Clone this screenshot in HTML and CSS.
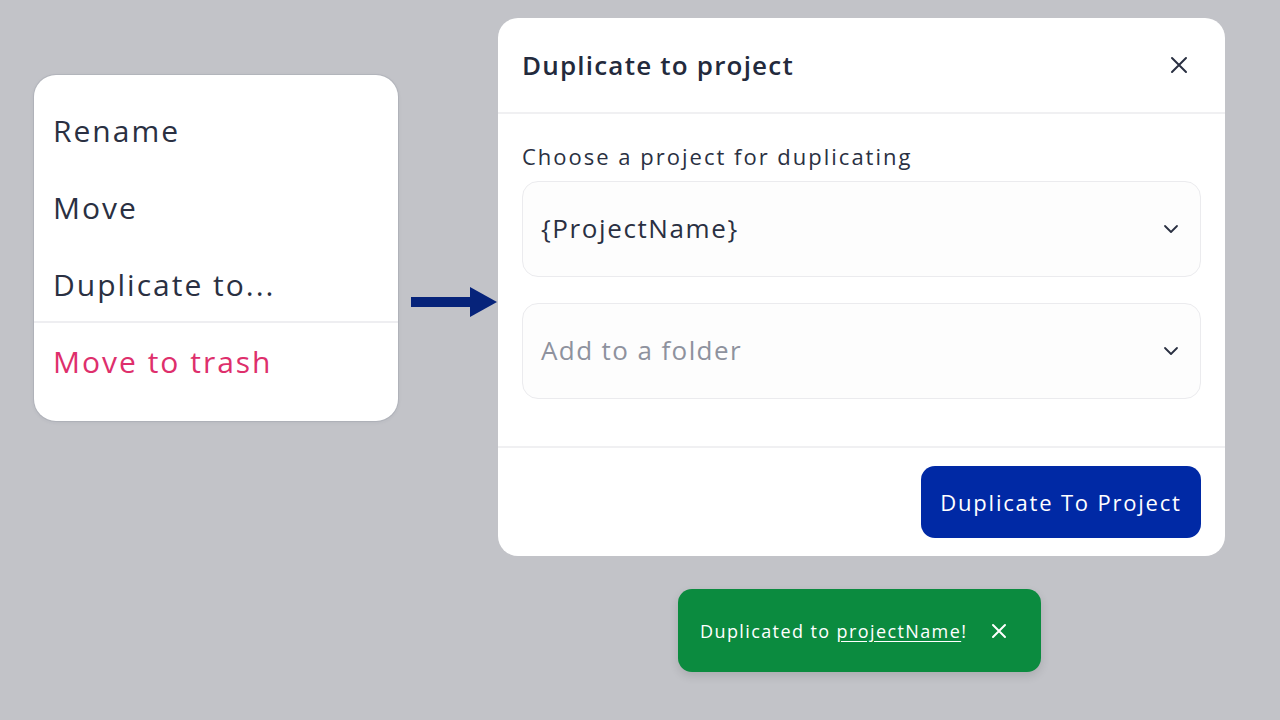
FILE: index.html
```html
<!DOCTYPE html>
<html lang="en">
<head>
<meta charset="utf-8">
<title>Duplicate to project</title>
<link rel="stylesheet" href="styles.css">
</head>
<body>
<div class="stage">
  <div class="menu">
    <div class="menu-item">Rename</div>
    <div class="menu-item">Move</div>
    <div class="menu-item">Duplicate to...</div>
    <div class="menu-sep"></div>
    <div class="menu-item danger">Move to trash</div>
  </div>
  <div class="arrow">
    <svg width="86" height="32" viewBox="0 0 86 32"><rect x="0" y="10" width="60" height="10" fill="#06237a"/><polygon points="59,0 86,15 59,30" fill="#06237a"/></svg>
  </div>
  <div class="right">
    <div class="modal">
      <div class="modal-head">
        <h1 class="modal-title">Duplicate to project</h1>
        <svg class="close" width="18" height="18" viewBox="0 0 18 18"><path d="M2 2 L16 16 M16 2 L2 16" stroke="#2a3042" stroke-width="2" stroke-linecap="round"/></svg>
      </div>
      <div class="modal-body">
        <div class="label">Choose a project for duplicating</div>
        <div class="select">
          <span class="value">{ProjectName}</span>
          <svg class="chev" width="16" height="10" viewBox="0 0 16 10"><path d="M2 2 L8 8 L14 2" fill="none" stroke="#2a3042" stroke-width="1.8" stroke-linecap="round" stroke-linejoin="round"/></svg>
        </div>
        <div class="select">
          <span class="value placeholder">Add to a folder</span>
          <svg class="chev" width="16" height="10" viewBox="0 0 16 10"><path d="M2 2 L8 8 L14 2" fill="none" stroke="#2a3042" stroke-width="1.8" stroke-linecap="round" stroke-linejoin="round"/></svg>
        </div>
      </div>
      <div class="modal-foot">
        <button class="primary">Duplicate To Project</button>
      </div>
    </div>
    <div class="toast">
      <span class="toast-text">Duplicated to <u>projectName</u>!</span>
      <svg width="16" height="16" viewBox="0 0 16 16"><path d="M2 2 L14 14 M14 2 L2 14" stroke="#ffffff" stroke-width="2" stroke-linecap="round"/></svg>
    </div>
  </div>
</div>
</body>
</html>
```

FILE: styles.css
```css
* { box-sizing: border-box; }
html, body { margin: 0; padding: 0; }
body {
  background: #c2c3c8;
  font-family: "Open Sans", "Noto Sans", "Liberation Sans", sans-serif;
  color: #2a3042;
  width: 1280px;
  height: 720px;
  overflow: hidden;
}
.stage {
  display: flex;
  align-items: flex-start;
  padding: 18px 0 0 34px;
}
.menu {
  width: 364px;
  margin-top: 57px;
  background: #ffffff;
  border-radius: 22px;
  box-shadow: 0 0 0 1px rgba(40, 50, 80, 0.08), 0 1px 4px rgba(40, 50, 80, 0.08);
  padding: 17px 0 21px;
}
.menu-item {
  height: 77px;
  display: flex;
  align-items: center;
  padding-left: 19px;
  font-size: 30px;
  color: #2a3042;
  letter-spacing: 2px;
}
.menu-item.danger { color: #de2f6c; }
.menu-sep {
  height: 2px;
  background: #eeeef1;
  margin-top: -2px;
}
.arrow {
  margin: 269px 1px 0 13px;
  width: 86px;
  height: 32px;
}
.arrow svg { display: block; }
.right {
  display: flex;
  flex-direction: column;
  align-items: center;
  width: 727px;
}
.modal {
  width: 727px;
  background: #ffffff;
  border-radius: 20px;
}
.modal-head {
  height: 96px;
  display: flex;
  align-items: center;
  justify-content: space-between;
  padding: 0 37px 0 24px;
  border-bottom: 2px solid #f0f0f2;
}
.modal-title {
  margin: 0;
  font-size: 26px;
  font-weight: 600;
  color: #232a3c;
  letter-spacing: 1.2px;
}
.close { display: block; }
.modal-body {
  padding: 27px 24px 47px;
  border-bottom: 2px solid #f0f0f2;
}
.label {
  font-size: 22px;
  color: #2a3042;
  margin-bottom: 10px;
  letter-spacing: 2px;
}
.select {
  height: 96px;
  border: 1.5px solid #ebebee;
  border-radius: 16px;
  background: #fdfdfd;
  display: flex;
  align-items: center;
  justify-content: space-between;
  padding: 0 21px 0 18px;
}
.select + .select { margin-top: 26px; }
.value {
  font-size: 26px;
  color: #2a3042;
  letter-spacing: 1.6px;
  margin-top: -3px;
}
.value.placeholder { color: #8e929e; letter-spacing: 1.4px; }
.chev { display: block; }
.modal-foot {
  display: flex;
  justify-content: flex-end;
  padding: 18px 24px 18px;
}
.primary {
  width: 280px;
  height: 72px;
  border: none;
  border-radius: 14px;
  background: #0029a5;
  color: #ffffff;
  font-family: inherit;
  font-size: 22px;
  font-weight: 500;
  letter-spacing: 1.8px;
}
.toast {
  margin-top: 33px;
  margin-right: 4px;
  width: 363px;
  height: 83px;
  border-radius: 14px;
  background: #0b8b3f;
  box-shadow: 0 4px 10px rgba(0, 0, 0, 0.12);
  display: flex;
  align-items: center;
  padding: 0 32px 0 22px;
  gap: 24px;
  color: #ffffff;
}
.toast-text { font-size: 18px; letter-spacing: 1.4px; }
.toast u { text-underline-offset: 3px; }
```
